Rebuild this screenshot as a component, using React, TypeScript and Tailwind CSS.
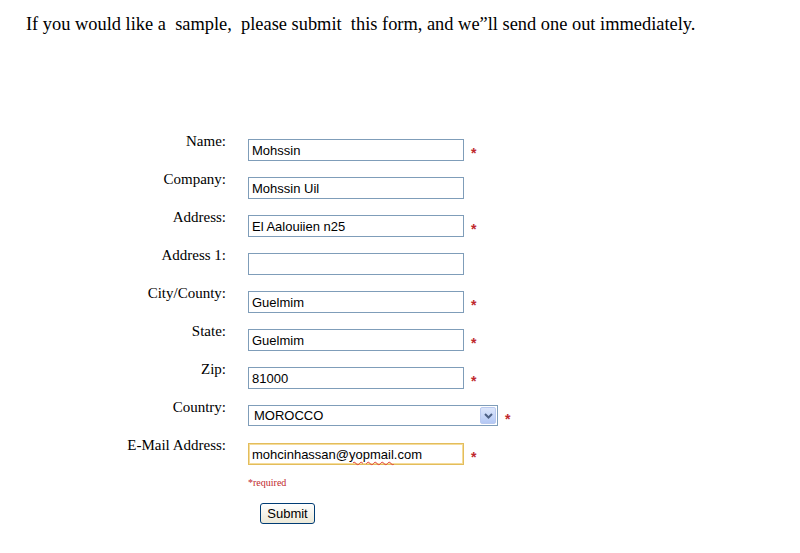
import React from "react";

interface Field {
  label: string;
  value: string;
  required?: boolean;
}

const fields: Field[] = [
  { label: "Name:", value: "Mohssin", required: true },
  { label: "Company:", value: "Mohssin Uil" },
  { label: "Address:", value: "El Aalouiien n25", required: true },
  { label: "Address 1:", value: "" },
  { label: "City/County:", value: "Guelmim", required: true },
  { label: "State:", value: "Guelmim", required: true },
  { label: "Zip:", value: "81000", required: true },
];

const serif = { fontFamily: '"Liberation Serif", "Times New Roman", serif' };
const sans = { fontFamily: '"Liberation Sans", Arial, sans-serif' };

function Star({ className = "" }: { className?: string }) {
  return (
    <span
      className={"text-[14px] font-bold leading-none text-[#c0282d] " + className}
      style={sans}
    >
      *
    </span>
  );
}

function Row({
  label,
  children,
}: {
  label: string;
  children: React.ReactNode;
}) {
  return (
    <div className="flex h-[38px] items-start">
      <div
        className="w-[227px] pr-[1px] pt-[1px] text-right text-[15px] leading-[18px] text-black"
        style={serif}
      >
        {label}
      </div>
      <div className="ml-[21px] mt-[8px] flex items-center">{children}</div>
    </div>
  );
}

export default function App() {
  return (
    <div className="h-[553px] w-[800px] overflow-hidden bg-white text-black">
      <p
        className="whitespace-pre pl-[26px] pt-[13px] text-[18.4px] leading-[22px]"
        style={serif}
      >
        {"If you would like a  sample,  please submit  this form, and we\u201dll send one out immediately."}
      </p>

      <div className="mt-[96px] flex flex-col">
        {fields.map((f) => (
          <Row key={f.label} label={f.label}>
            <input
              readOnly
              value={f.value}
              className="h-[22px] w-[216px] border border-[#7f9db9] bg-white px-[3px] text-[13px] text-black outline-none"
              style={sans}
            />
            {f.required && <Star className="ml-[7px] mt-[6px]" />}
          </Row>
        ))}

        <Row label="Country:">
          <div className="flex h-[21px] w-[250px] items-center justify-between border border-[#7f9db9] bg-white pl-[5px] pr-[1px]">
            <span className="text-[13px] leading-none" style={sans}>
              MOROCCO
            </span>
            <span className="flex h-[17px] w-[16px] items-center justify-center rounded-[2px] border border-[#b9c9ef] bg-gradient-to-b from-[#dce6fb] to-[#b4c8f4]">
              <svg width="9" height="6" viewBox="0 0 9 6">
                <path
                  d="M1 1 L4.5 4.5 L8 1"
                  fill="none"
                  stroke="#4d6185"
                  strokeWidth="2"
                />
              </svg>
            </span>
          </div>
          <Star className="ml-[7px] mt-[6px]" />
        </Row>

        <Row label="E-Mail Address:">
          <div
            className="flex h-[22px] w-[216px] items-center border border-[#e3bd5c] bg-white px-[3px] text-[13px] leading-none shadow-[inset_0_0_0_1px_#f5dc9a]"
            style={sans}
          >
            <span>
              mohcinhassan@
              <span className="underline decoration-[#e03c3c] decoration-wavy decoration-1 underline-offset-2">
                yopmail
              </span>
              .com
            </span>
          </div>
          <Star className="ml-[7px] mt-[6px]" />
        </Row>

        <div className="ml-[248px] mt-[5px] text-[10px] leading-none text-[#c0282d]" style={serif}>
          *required
        </div>

        <div className="ml-[260px] mt-[12px]">
          <button
            className="h-[21px] w-[55px] rounded-[3px] border border-[#003c74] bg-gradient-to-b from-white to-[#ece9d8] text-[13px] leading-none text-black"
            style={sans}
          >
            Submit
          </button>
        </div>
      </div>
    </div>
  );
}
